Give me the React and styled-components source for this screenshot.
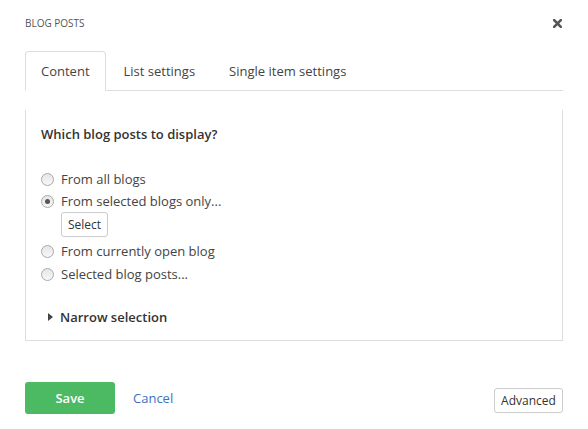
import React, { useState } from "react";
import styled, { createGlobalStyle } from "styled-components";

const Global = createGlobalStyle`
  html, body { margin: 0; padding: 0; background: #fff; }
  body { font-family: "Open Sans", "Noto Sans", sans-serif; color: #333; }
  * { box-sizing: border-box; }
`;

const Dialog = styled.div`
  width: 588px;
  height: 429px;
  padding: 16px 25px 0 25px;
  display: flex;
  flex-direction: column;
`;

const Header = styled.div`
  display: flex;
  align-items: center;
  justify-content: space-between;
  height: 14px;
`;

const Title = styled.h1`
  margin: 0;
  font-size: 10px;
  line-height: 14px;
  font-weight: 400;
  color: #555;
  text-transform: uppercase;
`;

const Close = styled.button`
  border: 0;
  background: none;
  padding: 0;
  margin-right: 1px;
  width: 9px;
  height: 9px;
  display: flex;
  cursor: pointer;
`;

const Tabs = styled.div`
  display: flex;
  margin-top: 21px;
  border-bottom: 1px solid #ddd;
  height: 40px;
`;

const Tab = styled.button`
  font: inherit;
  font-size: 13px;
  line-height: 19px;
  height: 40px;
  padding: 10px 15px;
  margin-right: 2px;
  margin-bottom: -1px;
  border: 1px solid ${(p) => (p.$active ? "#ddd" : "transparent")};
  border-bottom-color: ${(p) => (p.$active ? "#fff" : "transparent")};
  border-radius: 4px 4px 0 0;
  background: ${(p) => (p.$active ? "#fff" : "transparent")};
  color: #444;
  cursor: pointer;
`;

const Panel = styled.div`
  margin-top: 19px;
  border: 1px solid #ddd;
  border-top: none;
  padding: 15px 15px 14px 15px;
`;

const Heading = styled.h2`
  margin: 0 0 25px 0;
  font-size: 13px;
  line-height: 18px;
  font-weight: 600;
  color: #333;
`;

const Options = styled.div`
  display: flex;
  flex-direction: column;
`;

const Option = styled.label`
  display: flex;
  align-items: center;
  height: 22px;
  font-size: 13px;
  color: #444;
  cursor: pointer;
  margin-top: ${(p) => p.$gap || 0}px;
`;

const RadioDot = styled.span`
  width: 13px;
  height: 13px;
  border-radius: 50%;
  border: 1px solid #a9a9a9;
  background: linear-gradient(#e6e6e6, #f7f7f7);
  margin-right: 7px;
  margin-top: 1px;
  display: flex;
  align-items: center;
  justify-content: center;
  flex-shrink: 0;
  &::after {
    content: "";
    width: 5px;
    height: 5px;
    border-radius: 50%;
    background: ${(p) => (p.$checked ? "#555" : "transparent")};
  }
`;

const Plain = styled.button`
  font: inherit;
  font-size: 12px;
  color: #333;
  background: #fff;
  border: 1px solid #ccc;
  border-radius: 3px;
  height: 25px;
  padding: 0 6px;
  cursor: pointer;
`;

const SelectButton = styled(Plain)`
  align-self: flex-start;
  margin: 0 0 3px 20px;
  width: 47px;
`;

const Narrow = styled.button`
  font: inherit;
  font-size: 13px;
  line-height: 18px;
  font-weight: 600;
  color: #333;
  border: 0;
  background: none;
  padding: 0 0 0 7px;
  margin-top: 23px;
  display: flex;
  align-items: center;
  cursor: pointer;
`;

const Caret = styled.span`
  width: 0;
  height: 0;
  border-top: 4px solid transparent;
  border-bottom: 4px solid transparent;
  border-left: 5px solid #444;
  margin-right: 7px;
`;

const Footer = styled.div`
  margin-top: 41px;
  display: flex;
  align-items: flex-end;
`;

const Save = styled.button`
  font: inherit;
  font-size: 13px;
  font-weight: 600;
  color: #fff;
  background: #4cba63;
  border: 0;
  border-radius: 3px;
  width: 90px;
  height: 32px;
  cursor: pointer;
`;

const Cancel = styled.a`
  font-size: 13px;
  color: #3a72c4;
  margin-left: 18px;
  line-height: 32px;
  text-decoration: none;
  cursor: pointer;
`;

const Advanced = styled(Plain)`
  margin-left: auto;
  margin-bottom: 1px;
  width: 69px;
`;

const options = [
  "From all blogs",
  "From selected blogs only...",
  "From currently open blog",
  "Selected blog posts...",
];

export default function App() {
  const [tab, setTab] = useState(0);
  const [choice, setChoice] = useState(1);
  const tabs = ["Content", "List settings", "Single item settings"];
  return (
    <Dialog>
      <Global />
      <Header>
        <Title>Blog posts</Title>
        <Close aria-label="Close">
          <svg width="9" height="9" viewBox="0 0 9 9">
            <path d="M1.2 1.2 L7.8 7.8 M7.8 1.2 L1.2 7.8" stroke="#555" strokeWidth="2.6" strokeLinecap="square" />
          </svg>
        </Close>
      </Header>
      <Tabs>
        {tabs.map((t, i) => (
          <Tab key={t} $active={tab === i} onClick={() => setTab(i)}>
            {t}
          </Tab>
        ))}
      </Tabs>
      <Panel>
        <Heading>Which blog posts to display?</Heading>
        <Options>
          {options.map((o, i) => (
            <React.Fragment key={o}>
              <Option onClick={() => setChoice(i)} $gap={i === 3 ? 1 : 0}>
                <RadioDot $checked={choice === i} />
                {o}
              </Option>
              {i === 1 && <SelectButton>Select</SelectButton>}
            </React.Fragment>
          ))}
        </Options>
        <Narrow>
          <Caret />
          Narrow selection
        </Narrow>
      </Panel>
      <Footer>
        <Save>Save</Save>
        <Cancel>Cancel</Cancel>
        <Advanced>Advanced</Advanced>
      </Footer>
    </Dialog>
  );
}
